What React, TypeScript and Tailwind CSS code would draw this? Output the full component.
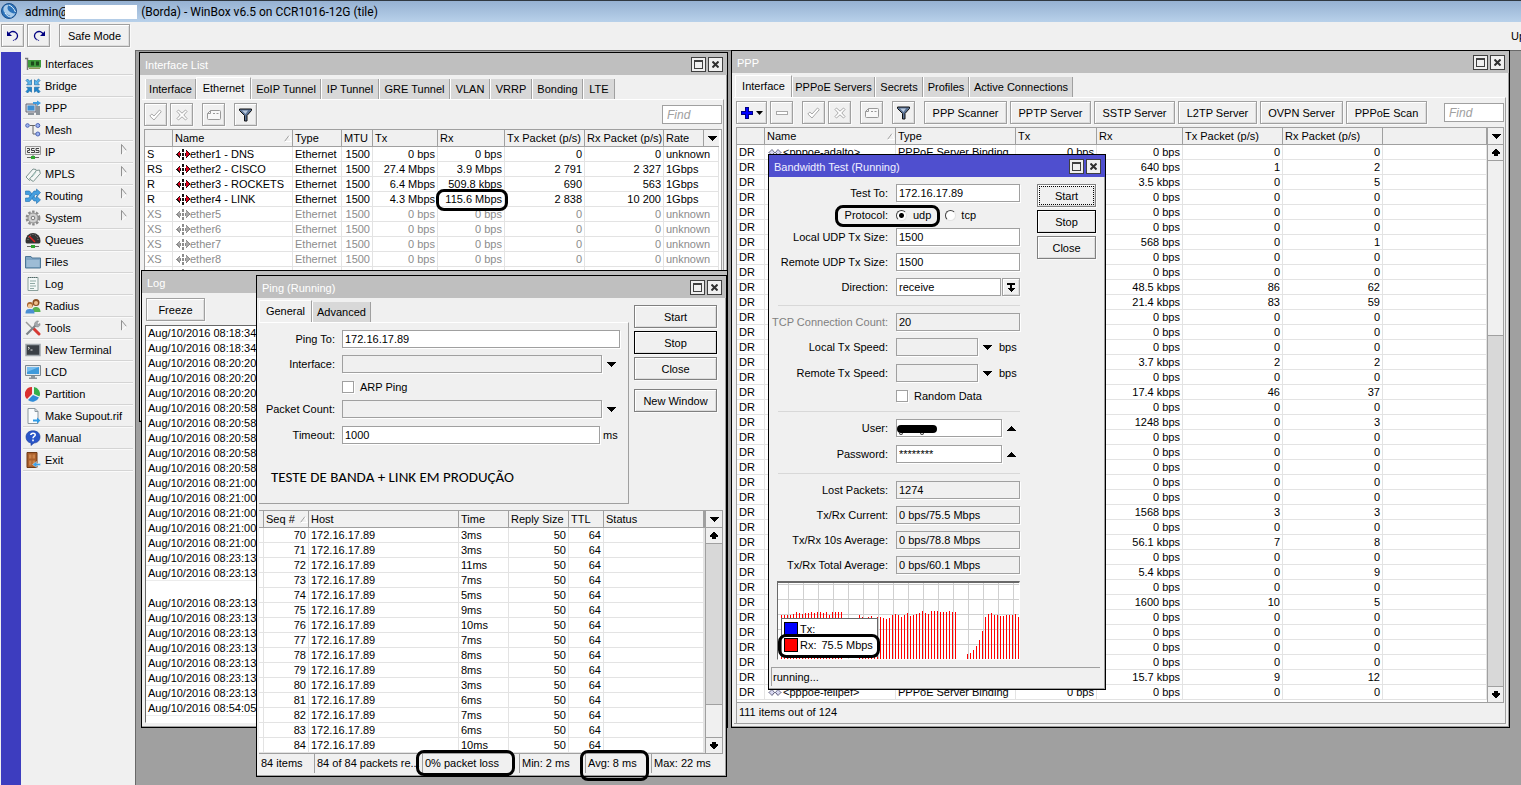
import type { ReactNode } from "react";
import clsx from "clsx";

const BEVEL = "border bg-[#f0f0f0] shadow-[inset_1px_1px_0_#fff,inset_-1px_-1px_0_#dcdcdc,1px_1px_0_#fafafa]";

/* ---------- small glyphs ---------- */

const DownTriangle = () => (
  <svg width="10" height="5" viewBox="0 0 10 5" shapeRendering="crispEdges">
    <path d="M0 0h10L5 5z" />
  </svg>
);

const UpTriangle = () => (
  <svg width="10" height="5" viewBox="0 0 10 5" shapeRendering="crispEdges">
    <path d="M5 0l5 5H0z" />
  </svg>
);

const ScrollArrow = ({ down }: { down?: boolean }) => (
  <svg width="8" height="7" viewBox="0 0 8 7" shapeRendering="crispEdges" className={clsx(down && "rotate-180")}>
    <path d="M3 0h2v1h1v1h1v1h1v2H6v2H2V5H0V3h1V2h1V1h1z" />
  </svg>
);

const SortMark = () => (
  <svg width="8" height="7" viewBox="0 0 8 7" fill="none">
    <path d="M.5 6.500L5 .5" stroke="#a0a0a0" />
    <path d="M5 .5l2.500 6H.5" stroke="#fff" />
  </svg>
);

const TickIcon = () => (
  <svg width="13" height="12" viewBox="0 0 13 12" fill="#fff" stroke="#a8a8a8">
    <path d="M.8 7l2-2 2.200 2L10.500 1l1.800 1.600L5 11z" />
  </svg>
);

const CrossIcon = () => (
  <svg width="12" height="12" viewBox="0 0 12 12" fill="#fff" stroke="#a8a8a8">
    <path d="M1 2.500L2.500 1 6 4.200 9.500 1 11 2.500 7.800 6 11 9.500 9.500 11 6 7.800 2.500 11 1 9.500 4.200 6z" />
  </svg>
);

const NoteIcon = () => (
  <svg width="14" height="12" viewBox="0 0 14 12" fill="none" stroke="#999">
    <path d="M3.500 1.500h9q1 0 1 1v7q0 1-1 1h-11q-1 0-1-1v-5z" fill="#f8f8f8" />
    <path d="M.5 4.500h3v-3M6 4.500h2M9.500 4.500h2" />
  </svg>
);

const FilterIcon = () => (
  <svg width="13" height="14" viewBox="0 0 13 14">
    <path d="M.5 1h12v1.500L8 7.500v5.500H5.500V7.500L.5 2.500z" fill="#5b7396" stroke="#111" />
    <path d="M3 2.500h6L6.500 6z" fill="#b9c9de" />
  </svg>
);

const PlusIcon = () => (
  <svg width="12" height="12" viewBox="0 0 12 12" shapeRendering="crispEdges">
    <path d="M4 0h4v4h4v4H8v4H4V8H0V4h4z" fill="#000080" />
    <path d="M5 1h2v4h4v2H7v4H5V7H1V5h4z" fill="#0000ff" />
  </svg>
);

const MinusIcon = () => (
  <svg width="12" height="4" viewBox="0 0 12 4">
    <rect x=".5" y=".5" width="11" height="3" fill="#fff" stroke="#a8a8a8" />
  </svg>
);

const UndoIcon = ({ flip }: { flip?: boolean }) => (
  <svg width="12" height="11" viewBox="0 0 12 11" fill="none" stroke="#000080" strokeWidth="1.300" className={clsx(flip && "-scale-x-100")}>
    <path d="M1.500 4.500C3 1.500 6 .8 8.500 2.200c3 2 2.500 5.500 0 7.300" />
    <path d="M8.500 9.500l-2.500 1" strokeDasharray="1 1" />
    <path d="M0 1v5h5z" fill="#000080" stroke="none" />
  </svg>
);

const EtherIcon = ({ off }: { off?: boolean }) => (
  <svg width="14" height="11" viewBox="0 0 14 11" shapeRendering="crispEdges" className="shrink-0">
    <path d="M0 5l4-4v3h1v3H4v3zM14 5l-4-4v3H9v3h1v3z" fill={off ? "#8c8c8c" : "#201010"} />
    <path d="M1 5l3-3v6zM13 5l-3-3v6z" fill={off ? "#a8a8a8" : "#d8001c"} />
    <path d="M6 0h2v3H6zM6 4h2v3H6zM6 8h2v3H6z" fill={off ? "#8c8c8c" : "#111"} />
  </svg>
);

const PppoeIcon = () => (
  <svg width="14" height="9" viewBox="0 0 14 9" fill="#d8d8f0" stroke="#22224a" strokeDasharray="1 .5" className="shrink-0">
    <path d="M1 4.500L4 1.500l2.500 3L4 7.500zM13 4.500l-3-3-2.500 3 2.500 3z" />
  </svg>
);

/* ---------- controls ---------- */

function Btn({ children, className, label, dark }: { children: ReactNode; className?: string; label?: string; dark?: string }) {
  return (
    <button
      type="button"
      aria-label={label}
      className={clsx("flex h-[23px] shrink-0 items-center justify-center", BEVEL, dark ?? "border-[#a0a0a0]", className)}
    >
      {children}
    </button>
  );
}

const IconBtn = ({ label, children }: { label: string; children: ReactNode }) => (
  <Btn label={label} className="w-[23px]">
    {children}
  </Btn>
);

function Field({ id, value, className, off, label }: { id?: string; value?: string; className?: string; off?: boolean; label?: string }) {
  return (
    <input
      id={id}
      aria-label={label}
      defaultValue={value}
      readOnly={off}
      className={clsx(
        "h-[18px] min-w-0 border border-[#a0a0a0] px-[2px] shadow-[1px_1px_0_#fff] outline-none",
        off ? "bg-[#f0f0f0]" : "bg-white",
        className,
      )}
    />
  );
}

const Find = () => (
  <input
    aria-label="Find"
    placeholder="Find"
    className="ml-auto h-[19px] w-[60px] border border-[#a0a0a0] bg-white px-1 text-xs italic outline-none placeholder:text-[#a0a0a0]"
  />
);

const Check = ({ id }: { id: string }) => (
  <input id={id} type="checkbox" className="size-3 appearance-none border border-[#a0a0a0] bg-white shadow-[1px_1px_0_#fff]" />
);

const Radio = ({ id, checked }: { id: string; checked?: boolean }) => (
  <input
    id={id}
    type="radio"
    name="protocol"
    defaultChecked={checked}
    className="size-[11px] appearance-none rounded-full border border-t-[#404040] border-r-[#e3e3e3] border-b-[#e3e3e3] border-l-[#404040] bg-white checked:bg-[radial-gradient(circle,#000_2px,#fff_3px)]"
  />
);

const ArrowBtn = ({ label, up }: { label: string; up?: boolean }) => (
  <button type="button" aria-label={label} className="flex h-[18px] w-[10px] items-center justify-center">
    {up ? <UpTriangle /> : <DownTriangle />}
  </button>
);

function Ring({ className }: { className: string }) {
  return <div className={clsx("pointer-events-none absolute rounded-lg border-[3px] border-black", className)} />;
}

/* ---------- window chrome ---------- */

function Win({ title, active, className, children }: { title: string; active?: boolean; className: string; children: ReactNode }) {
  return (
    <section className={clsx("absolute flex flex-col border border-black bg-[#f0f0f0] shadow-[inset_-1px_-1px_0_#a0a0a0]", className)}>
      <header
        className={clsx(
          "flex h-[22px] shrink-0 items-center gap-[2px] pr-1 pl-[5px]",
          active ? "bg-[#4f4fcf] text-[#f0f0ff]" : "bg-[#bfbfbf] text-white",
        )}
      >
        <h2 className="mt-[2px] mr-auto">{title}</h2>
        <button type="button" aria-label="Maximize" className="flex size-[15px] items-center justify-center border border-[#404040] bg-[#f0f0f0]">
          <span className="size-[9px] border border-t-2 border-[#404040]" />
        </button>
        <button type="button" aria-label="Close" className="flex size-[15px] items-center justify-center border border-[#404040] bg-[#f0f0f0]">
          <svg width="7" height="7" viewBox="0 0 7 7" stroke="#303030" strokeWidth="2">
            <path d="M.5.5l6 6M6.500.5l-6 6" />
          </svg>
        </button>
      </header>
      {children}
    </section>
  );
}

type Tab = { label: string; width: string };

function Tabs({ tabs, active, className }: { tabs: Tab[]; active: string; className?: string }) {
  return (
    <div role="tablist" className={clsx("mt-[2px] flex h-[22px] shrink-0 items-end", className)}>
      {tabs.map((t) => (
        <button
          key={t.label}
          type="button"
          role="tab"
          aria-selected={t.label === active}
          className={clsx(
            "shrink-0 border-r border-l border-l-white border-r-[#a0a0a0]",
            t.label === active ? "h-[22px] border-t border-t-white bg-[#f0f0f0] pb-[2px]" : "h-5 bg-[#d8d8d8]",
            t.width,
          )}
        >
          {t.label}
        </button>
      ))}
    </div>
  );
}

/* ---------- tables ---------- */

type Col = { label: string; width?: string; right?: boolean; sort?: boolean; menu?: boolean };

function Grid({ cols, rows, dim }: { cols: Col[]; rows: ReactNode[][]; dim?: (i: number) => boolean }) {
  return (
    <table className="w-full table-fixed border-separate border-spacing-0">
      <thead>
        <tr>
          {cols.map((c, i) => (
            <th
              key={i}
              className={clsx(
                "h-[17px] border-r border-b border-[#a0a0a0] bg-[#f0f0f0] p-0 text-left leading-4 font-normal",
                c.width,
                c.menu && "border-r-0",
              )}
            >
              <div className={clsx("flex h-4 items-center justify-between", c.label && "pl-[2px]")}>
                {c.label}
                {c.sort && <SortMark />}
                {c.menu && (
                  <button type="button" aria-label="Columns" className="flex h-4 w-4 items-center justify-center border-l border-[#a0a0a0]">
                    <DownTriangle />
                  </button>
                )}
              </div>
            </th>
          ))}
        </tr>
      </thead>
      <tbody>
        {rows.map((r, i) => (
          <tr key={i} className={clsx(dim?.(i) && "text-[#8c8c8c]")}>
            {cols.map((c, j) => (
              <td
                key={j}
                className={clsx(
                  "h-[15px] border-r border-b border-[#e3e3e3] p-0 leading-[14px]",
                  c.right ? "pr-[2px] text-right" : c.label && "pl-[2px]",
                )}
              >
                {r[j]}
              </td>
            ))}
          </tr>
        ))}
      </tbody>
    </table>
  );
}

function ScrollBar({ children, className }: { children: ReactNode; className?: string }) {
  return (
    <div className={clsx("flex shrink-0 flex-col border-l border-[#a0a0a0] bg-[#d8d8d8]", className)}>
      <button type="button" aria-label="Columns" className="flex h-[17px] shrink-0 items-center justify-center border-b border-[#a0a0a0] bg-[#f0f0f0]">
        <DownTriangle />
      </button>
      <button type="button" aria-label="Scroll up" className="flex h-4 shrink-0 items-center justify-center border-b border-[#a0a0a0] bg-[#f0f0f0]">
        <ScrollArrow />
      </button>
      {children}
      <button type="button" aria-label="Scroll down" className="flex h-4 shrink-0 items-center justify-center border-t border-[#a0a0a0] bg-[#f0f0f0]">
        <ScrollArrow down />
      </button>
    </div>
  );
}

/* ---------- Interface List ---------- */

const ifaceTabs: Tab[] = [
  { label: "Interface", width: "w-[51px]" },
  { label: "Ethernet", width: "w-[55px]" },
  { label: "EoIP Tunnel", width: "w-[70px]" },
  { label: "IP Tunnel", width: "w-[58px]" },
  { label: "GRE Tunnel", width: "w-[71px]" },
  { label: "VLAN", width: "w-[40px]" },
  { label: "VRRP", width: "w-[42px]" },
  { label: "Bonding", width: "w-[51px]" },
  { label: "LTE", width: "w-[32px]" },
];

const ifaceCols: Col[] = [
  { label: "", width: "w-[28px]" },
  { label: "Name", width: "w-[120px]", sort: true },
  { label: "Type", width: "w-[49px]" },
  { label: "MTU", width: "w-[31px]", right: true },
  { label: "Tx", width: "w-[65px]", right: true },
  { label: "Rx", width: "w-[67px]", right: true },
  { label: "Tx Packet (p/s)", width: "w-[80px]", right: true },
  { label: "Rx Packet (p/s)", width: "w-[79px]", right: true },
  { label: "Rate", menu: true },
];

const ifaces = [
  ["S", "ether1 - DNS", "0 bps", "0 bps", "0", "0", "unknown"],
  ["RS", "ether2 - CISCO", "27.4 Mbps", "3.9 Mbps", "2 791", "2 327", "1Gbps"],
  ["R", "ether3 - ROCKETS", "6.4 Mbps", "509.8 kbps", "690", "563", "1Gbps"],
  ["R", "ether4 - LINK", "4.3 Mbps", "115.6 Mbps", "2 838", "10 200", "1Gbps"],
  ["XS", "ether5", "0 bps", "0 bps", "0", "0", "unknown"],
  ["XS", "ether6", "0 bps", "0 bps", "0", "0", "unknown"],
  ["XS", "ether7", "0 bps", "0 bps", "0", "0", "unknown"],
  ["XS", "ether8", "0 bps", "0 bps", "0", "0", "unknown"],
  ["XS", "ether9", "0 bps", "0 bps", "0", "0", "unknown"],
];

function InterfaceList() {
  const rows = ifaces.map(([flag, name, tx, rx, txp, rxp, rate]) => [
    <span className="pl-[2px]">{flag}</span>,
    <span className="flex items-center pl-px">
      <EtherIcon off={flag === "XS"} />
      {name}
    </span>,
    "Ethernet",
    "1500",
    tx,
    rx,
    txp,
    rxp,
    rate,
  ]);
  return (
    <Win title="Interface List" className="top-[2px] left-[4px] h-[370px] w-[589px]">
      <Tabs tabs={ifaceTabs} active="Ethernet" className="pl-[5px]" />
      <div className="mr-[3px] mb-[3px] ml-[2px] flex min-h-0 flex-1 flex-col gap-[3px] border-t border-r border-t-white border-r-[#a0a0a0] pt-[3px] pr-px pl-[2px]">
        <div className="flex items-center gap-[9px]">
          <div className="flex gap-[3px]">
            <IconBtn label="Enable"><TickIcon /></IconBtn>
            <IconBtn label="Disable"><CrossIcon /></IconBtn>
          </div>
          <IconBtn label="Comment"><NoteIcon /></IconBtn>
          <IconBtn label="Filter"><FilterIcon /></IconBtn>
          <Find />
        </div>
        <div className="min-h-0 flex-1 overflow-hidden border border-[#a0a0a0] bg-white pr-[2px]">
          <Grid cols={ifaceCols} rows={rows} dim={(i) => i > 3} />
        </div>
      </div>
    </Win>
  );
}

/* ---------- Log ---------- */

const logTimes = [
  "08:18:34", "08:18:34", "08:20:20", "08:20:20", "08:20:20",
  "08:20:58", "08:20:58", "08:20:58", "08:20:58", "08:20:58",
  "08:21:00", "08:21:00", "08:21:00", "08:21:00", "08:21:00",
  "08:23:13", "08:23:13", "",
  "08:23:13", "08:23:13", "08:23:13", "08:23:13", "08:23:13", "08:23:13", "08:23:13",
  "08:54:05",
];

function LogWindow() {
  return (
    <Win title="Log" className="top-[220px] left-[6px] h-[458px] w-[587px]">
      <div className="flex min-h-0 flex-1 flex-col gap-1 px-[3px] pt-[5px] pb-[4px]">
        <Btn className="ml-px w-[59px]">Freeze</Btn>
        <ul className="min-h-0 flex-1 overflow-hidden border border-t-[#696969] border-r-white border-b-white border-l-[#696969] bg-white">
          {logTimes.map((t, i) => (
            <li key={i} className={clsx("h-[15px] pl-[2px] leading-[14px]", t ? "border-b border-[#ececec]" : "")}>
              {t && `Aug/10/2016 ${t}`}
            </li>
          ))}
        </ul>
      </div>
    </Win>
  );
}

/* ---------- Ping ---------- */

const pingTabs: Tab[] = [
  { label: "General", width: "w-[53px]" },
  { label: "Advanced", width: "w-[59px]" },
];

const pingCols: Col[] = [
  { label: "", width: "w-[5px]" },
  { label: "Seq #", width: "w-[45px]", right: true, sort: true },
  { label: "Host", width: "w-[150px]" },
  { label: "Time", width: "w-[50px]" },
  { label: "Reply Size", width: "w-[60px]", right: true },
  { label: "TTL", width: "w-[35px]", right: true },
  { label: "Status", width: "w-[100px]" },
  { label: "" },
];

const pingTimes = [3, 3, 11, 7, 5, 9, 10, 7, 8, 8, 3, 6, 7, 6, 10];

const pingRows = pingTimes.map((ms, i) => ["", String(70 + i), "172.16.17.89", `${ms}ms`, "50", "64", "", ""]);

const pingStatus = [
  ["84 items", "w-[55px]"],
  ["84 of 84 packets re...", "w-[108px]"],
  ["0% packet loss", "w-[97px]"],
  ["Min: 2 ms", "w-[66px]"],
  ["Avg: 8 ms", "w-[66px]"],
  ["Max: 22 ms", "w-[72px]"],
];

function PingRow({ id, label, tall, children }: { id: string; label: string; tall?: boolean; children: ReactNode }) {
  return (
    <div className={clsx("flex", tall ? "h-[19px]" : "h-[18px]")}>
      <label htmlFor={id} className="mr-[7px] w-[76px] text-right leading-[18px]">
        {label}
      </label>
      {children}
    </div>
  );
}

function PingWindow() {
  return (
    <Win title="Ping (Running)" className="top-[225px] left-[121px] h-[502px] w-[471px]">
      <div className="flex pr-[9px] pl-[2px]">
        <div className="flex-1">
          <Tabs tabs={pingTabs} active="General" />
          <form className="flex h-[182px] flex-col gap-[7px] border-t border-r border-b border-t-white border-r-[#a0a0a0] border-b-[#a0a0a0] pt-[7px]">
            <PingRow id="ping-to" label="Ping To:">
              <Field id="ping-to" value="172.16.17.89" className="w-[278px]" />
            </PingRow>
            <PingRow id="ping-if" label="Interface:" tall>
              <Field id="ping-if" off className="mr-1 w-[260px]" />
              <ArrowBtn label="Choose interface" />
            </PingRow>
            <div className="flex h-3 items-center gap-[6px] pl-[83px]">
              <Check id="arp" />
              <label htmlFor="arp">ARP Ping</label>
            </div>
            <PingRow id="ping-count" label="Packet Count:" tall>
              <Field id="ping-count" off className="mr-1 w-[260px]" />
              <ArrowBtn label="Set packet count" />
            </PingRow>
            <PingRow id="ping-timeout" label="Timeout:">
              <Field id="ping-timeout" value="1000" className="mr-[3px] w-[258px]" />
              <span className="leading-[18px]">ms</span>
            </PingRow>
            <p className="mt-4 pl-3 font-[Carlito,Lato,sans-serif] text-[15px] leading-5">TESTE DE BANDA + LINK EM PRODUÇÃO</p>
          </form>
        </div>
        <div className="ml-[5px] flex w-[83px] flex-col gap-[3px] pt-[7px]">
          <Btn dark="border-[#808080]">Start</Btn>
          <Btn dark="border-black">Stop</Btn>
          <Btn dark="border-[#808080]">Close</Btn>
          <Btn dark="border-[#808080]" className="mt-[6px]">New Window</Btn>
        </div>
      </div>
      <div className="mt-[6px] mr-[3px] ml-[2px] flex min-h-0 flex-1 border border-l-0 border-[#a0a0a0] bg-white">
        <div className="min-w-0 flex-1 overflow-hidden">
          <Grid cols={pingCols} rows={pingRows} />
        </div>
        <ScrollBar className="w-[17px]">
          <div className="mt-auto h-[33px] shrink-0 border-t border-[#a0a0a0] bg-[#f0f0f0]" />
        </ScrollBar>
      </div>
      <footer className="mx-[2px] mb-[3px] flex h-[19px] shrink-0">
        {pingStatus.map(([text, width], i) => (
          <span key={text} className={clsx("shrink-0 pl-[2px] leading-[19px]", i > 0 && "border-l border-[#a0a0a0]", width)}>
            {text}
          </span>
        ))}
      </footer>
    </Win>
  );
}

/* ---------- PPP ---------- */

const pppTabs: Tab[] = [
  { label: "Interface", width: "w-[57px]" },
  { label: "PPPoE Servers", width: "w-[83px]" },
  { label: "Secrets", width: "w-[48px]" },
  { label: "Profiles", width: "w-[46px]" },
  { label: "Active Connections", width: "w-[104px]" },
];

const pppButtons = [
  ["PPP Scanner", "w-[83px]"],
  ["PPTP Server", "w-[81px]"],
  ["SSTP Server", "w-[81px]"],
  ["L2TP Server", "w-[79px]"],
  ["OVPN Server", "w-[83px]"],
  ["PPPoE Scan", "w-[81px]"],
];

const pppCols: Col[] = [
  { label: "", width: "w-[28px]" },
  { label: "Name", width: "w-[131px]", sort: true },
  { label: "Type", width: "w-[120px]" },
  { label: "Tx", width: "w-[81px]", right: true },
  { label: "Rx", width: "w-[86px]", right: true },
  { label: "Tx Packet (p/s)", width: "w-[100px]", right: true },
  { label: "Rx Packet (p/s)", width: "w-[100px]", right: true },
  { label: "" },
];

const idle = ["0 bps", "0", "0"];
const traffic = [
  idle, ["640 bps", "1", "2"], ["3.5 kbps", "0", "5"], idle, idle, idle,
  ["568 bps", "0", "1"], idle, idle, ["48.5 kbps", "86", "62"], ["21.4 kbps", "83", "59"],
  idle, idle, idle, ["3.7 kbps", "2", "2"], idle, ["17.4 kbps", "46", "37"], idle,
  ["1248 bps", "0", "3"], idle, idle, idle, idle, idle, ["1568 bps", "3", "3"], idle,
  ["56.1 kbps", "7", "8"], idle, ["5.4 kbps", "0", "9"], idle, ["1600 bps", "10", "5"],
  idle, idle, idle, idle, ["15.7 kbps", "9", "12"], idle,
];

function PppWindow() {
  const names: Record<number, string> = { 0: "<pppoe-adalto>", [traffic.length - 1]: "<pppoe-felipef>" };
  const rows = traffic.map(([rx, txp, rxp], i) =>
    names[i]
      ? [
          <span className="pl-[2px]">DR</span>,
          <span className="flex items-center gap-px pl-px">
            <PppoeIcon />
            {names[i]}
          </span>,
          "PPPoE Server Binding",
          "0 bps",
          rx,
          txp,
          rxp,
          "",
        ]
      : [<span className="pl-[2px]">DR</span>, "", "", "", rx, txp, rxp, ""],
  );
  return (
    <Win title="PPP" className="top-0 left-[596px] h-[678px] w-[779px]">
      <Tabs tabs={pppTabs} active="Interface" className="pl-[3px]" />
      <div className="mr-[3px] mb-[3px] ml-[2px] flex min-h-0 flex-1 flex-col border border-l-0 border-[#a0a0a0] border-t-white pt-[3px] pr-px pl-[2px]">
        <div className="mb-[3px] flex items-center gap-[9px]">
          <div className="flex gap-[3px]">
            <Btn label="Add" className="w-[31px] gap-[3px]">
              <PlusIcon />
              <svg width="7" height="4" viewBox="0 0 7 4"><path d="M0 0h7L3.500 4z" /></svg>
            </Btn>
            <IconBtn label="Remove"><MinusIcon /></IconBtn>
          </div>
          <div className="flex gap-[3px]">
            <IconBtn label="Enable"><TickIcon /></IconBtn>
            <IconBtn label="Disable"><CrossIcon /></IconBtn>
          </div>
          <IconBtn label="Comment"><NoteIcon /></IconBtn>
          <IconBtn label="Filter"><FilterIcon /></IconBtn>
          <div className="flex gap-[3px]">
            {pppButtons.map(([label, width]) => (
              <Btn key={label} className={width}>{label}</Btn>
            ))}
          </div>
          <Find />
        </div>
        <div className="flex min-h-0 flex-1 border border-[#a0a0a0] bg-white">
          <div className="min-w-0 flex-1 overflow-hidden">
            <Grid cols={pppCols} rows={rows} />
          </div>
          <ScrollBar className="w-4">
            <div className="h-[175px] shrink-0 border-b border-[#a0a0a0] bg-[#f0f0f0]" />
            <div className="flex-1" />
          </ScrollBar>
        </div>
        <footer className="h-5 shrink-0 border-l border-[#a0a0a0] pl-[2px] leading-[19px]">111 items out of 124</footer>
      </div>
    </Win>
  );
}

/* ---------- Bandwidth Test ---------- */

const rxBars = [
  44, 44, 44, 44, 45, 47, 46, 45, 46, 46, 47, 46, 47, 47, 46, 47, 44, 47, 47, 47, 47, 0, 0, 0, 0, 0,
  44, 42, 41, 42, 43, 41, 42, 42, 41, 40, 41, 44, 45, 44, 42, 44, 46, 43, 44, 45, 46, 48, 46, 45, 48, 48, 48, 47, 47, 47, 48, 47, 47, 0, 0, 0,
  5, 6, 9, 13, 19, 28, 42, 45, 46, 44, 44, 43, 43, 44, 44, 44, 45, 42,
];

function TrafficChart() {
  return (
    <div className="relative ml-2 h-[79px] border border-t-2 border-t-[#696969] border-r-white border-b-white border-l-[#696969] bg-white">
      <svg width="241" height="76" viewBox="0 0 241 76" shapeRendering="crispEdges" className="block">
        {Array.from({ length: 16 }, (_, i) => (
          <rect key={i} x={10 + i * 15} y="0" width="1" height="76" fill="#d0d0d0" />
        ))}
        {Array.from({ length: 6 }, (_, i) => (
          <rect key={i} x="0" y={1 + i * 15} width="241" height="1" fill="#d0d0d0" />
        ))}
        {rxBars.map((h, i) => (
          <rect key={i} x={3 + i * 3} y={76 - h} width="1" height={h} fill="#f00" />
        ))}
      </svg>
      <dl className="absolute top-[35px] left-[3px] flex h-[39px] w-[97px] flex-col gap-[2px] border border-[#696969] bg-white px-[2px] pt-[3px] leading-[14px]">
        <div className="flex gap-[2px]">
          <dt className="flex gap-[2px]"><span className="size-[14px] border border-black bg-[#0000ff]" />Tx:</dt>
        </div>
        <div className="flex gap-[5px]">
          <dt className="flex gap-[2px]"><span className="size-[14px] border border-black bg-[#ff0000]" />Rx:</dt>
          <dd>75.5 Mbps</dd>
        </div>
      </dl>
    </div>
  );
}

function TestRow({ id, label, height = "h-[18px]", off, children }: { id: string; label: string; height?: string; off?: boolean; children: ReactNode }) {
  return (
    <div className={clsx("flex", height)}>
      <label htmlFor={id} className={clsx("mr-2 w-[119px] text-right leading-[18px]", off && "text-[#808080]")}>
        {label}
      </label>
      {children}
    </div>
  );
}

const Divider = () => <hr className="ml-[9px] h-[3px] border-t-0 border-b border-[#d8d8d8]" />;

const results = [
  ["lost", "Lost Packets:", "1274"],
  ["current", "Tx/Rx Current:", "0 bps/75.5 Mbps"],
  ["avg10", "Tx/Rx 10s Average:", "0 bps/78.8 Mbps"],
  ["total", "Tx/Rx Total Average:", "0 bps/60.1 Mbps"],
];

function BandwidthTest() {
  return (
    <Win title="Bandwidth Test (Running)" active className="top-[104px] left-[633px] h-[536px] w-[338px]">
      <div className="flex flex-1 pt-[7px]">
        <form className="flex w-[251px] flex-col gap-[7px]">
          <TestRow id="test-to" label="Test To:">
            <Field id="test-to" value="172.16.17.89" className="flex-1" />
          </TestRow>
          <fieldset className="flex h-3 items-center leading-3">
            <legend className="float-left mr-2 w-[119px] text-right">Protocol:</legend>
            <Radio id="udp" checked />
            <label htmlFor="udp" className="mr-[14px] ml-[6px]">udp</label>
            <Radio id="tcp" />
            <label htmlFor="tcp" className="ml-[5px]">tcp</label>
          </fieldset>
          <TestRow id="local-udp" label="Local UDP Tx Size:">
            <Field id="local-udp" value="1500" className="flex-1" />
          </TestRow>
          <TestRow id="remote-udp" label="Remote UDP Tx Size:">
            <Field id="remote-udp" value="1500" className="flex-1" />
          </TestRow>
          <TestRow id="direction" label="Direction:">
            <select id="direction" defaultValue="receive" className="h-[18px] flex-1 appearance-none border border-[#a0a0a0] bg-white px-[2px] leading-4 outline-none">
              <option>receive</option>
              <option>send</option>
              <option>both</option>
            </select>
            <button type="button" aria-label="Choose direction" className={clsx("ml-px flex h-[18px] w-[18px] items-center justify-center border-[#a0a0a0]", BEVEL)}>
              <svg width="8" height="9" viewBox="0 0 8 9" shapeRendering="crispEdges">
                <path d="M0 0h8v2H0zM3 2h2v3h3L4 9 0 5h3z" />
              </svg>
            </button>
          </TestRow>
          <Divider />
          <TestRow id="tcp-count" label="TCP Connection Count:" off>
            <Field id="tcp-count" value="20" off className="flex-1" />
          </TestRow>
          <TestRow id="local-speed" label="Local Tx Speed:" height="h-[19px]">
            <Field id="local-speed" off className="mr-1 w-[82px]" />
            <ArrowBtn label="Set local speed" />
            <span className="ml-[7px] leading-[18px]">bps</span>
          </TestRow>
          <TestRow id="remote-speed" label="Remote Tx Speed:" height="h-[19px]">
            <Field id="remote-speed" off className="mr-1 w-[82px]" />
            <ArrowBtn label="Set remote speed" />
            <span className="ml-[7px] leading-[18px]">bps</span>
          </TestRow>
          <div className="flex h-3 items-center gap-[6px] pl-[127px]">
            <Check id="random" />
            <label htmlFor="random">Random Data</label>
          </div>
          <Divider />
          <TestRow id="user" label="User:" height="h-[19px]">
            <div className="relative mr-1 flex w-[106px]">
              <Field id="user" className="flex-1" />
              <svg width="42" height="13" viewBox="0 0 42 13" className="absolute top-[5px] left-0">
                <path d="M5 5h32" stroke="#000" strokeWidth="8" strokeLinecap="round" />
                <path d="M3 9.500q2 2 4 0M24 9.500q2 2 4 0" fill="none" stroke="#222" />
              </svg>
            </div>
            <ArrowBtn label="Clear user" up />
          </TestRow>
          <TestRow id="password" label="Password:" height="h-[19px]">
            <Field id="password" value="********" className="mr-1 w-[106px]" />
            <ArrowBtn label="Clear password" up />
          </TestRow>
          <Divider />
          {results.map(([id, label, value]) => (
            <TestRow key={id} id={id} label={label}>
              <Field id={id} value={value} off className="flex-1" />
            </TestRow>
          ))}
          <TrafficChart />
        </form>
        <div className="ml-[17px] flex w-[59px] flex-col gap-[3px]">
          <Btn dark="border-[#808080]" className="p-px">
            <span className="flex h-full w-full items-center justify-center border border-dotted border-black">Start</span>
          </Btn>
          <Btn dark="border-black">Stop</Btn>
          <Btn dark="border-[#808080]">Close</Btn>
        </div>
      </div>
      <footer className="mr-[5px] mb-[3px] ml-[2px] h-[19px] shrink-0 border-t border-l border-[#a0a0a0] pl-px leading-[18px]">running...</footer>
    </Win>
  );
}

/* ---------- side menu ---------- */

const icons: Record<string, ReactNode> = {
  Interfaces: (
    <>
      <path d="M0 2.500h2.500V14" stroke="#777" fill="none" strokeWidth="1.500" />
      <path d="M3 4h13v7.500H3z" fill="#3f9a3c" />
      <path d="M6 5.500h3v4H6zM11 5.500h3v4h-3z" fill="#1d4a1c" />
      <path d="M4 11.500h11V13H4z" fill="#8a9a58" />
    </>
  ),
  Bridge: (
    <g stroke="#1c6ca8" strokeWidth=".7">
      <path d="M1 2.500L2.500 1l2.300 2.300L6.500 1.800v5H1.600L3.300 5z" fill="#5cb8ee" />
      <path d="M15 2.500L13.500 1l-2.300 2.300L9.500 1.800v5h4.900L12.700 5z" fill="#5cb8ee" />
      <path d="M1 13.500L2.500 15l2.300-2.300 1.700 1.500v-5H1.600L3.300 11z" fill="#1f86cc" />
      <path d="M15 13.500L13.500 15l-2.300-2.300-1.700 1.500v-5h4.900L12.700 11z" fill="#1f86cc" />
    </g>
  ),
  PPP: (
    <>
      <path d="M1 4h10v8H1z" fill="#d5dce2" stroke="#667" />
      <path d="M2.500 5.500h7v5h-7z" fill="#3f8fd2" />
      <path d="M11 6h4v9h-4zM3 13h6v2H3z" fill="#8b939b" />
      <path d="M8 2h4V.5L16 3l-4 3V4H8z" fill="#3d9be0" />
    </>
  ),
  Mesh: (
    <>
      <path d="M5 3.500h5M8 4v8h3" stroke="#666" fill="none" />
      <g fill="#9db4ee" stroke="#4c63b4">
        <circle cx="2.500" cy="3.500" r="1.800" />
        <circle cx="12.800" cy="3.500" r="2" />
        <circle cx="12.800" cy="12" r="2" />
      </g>
    </>
  ),
  IP: (
    <>
      <path d="M.5 2.500h15v8H.5z" fill="#eee" stroke="#999" />
      <path d="M2 4.500h2.500v2H2.500v2H5M6 8.500h3.500v-2h-3v-2H9.500M14 4.500h-3v2h3v2h-3.500" stroke="#444" fill="none" />
      <path d="M2 13.500h12M8 11v2" stroke="#666" />
      <path d="M6 12h4v3H6z" fill="#2fa52f" />
    </>
  ),
  MPLS: (
    <g fill="#f3f6f5" stroke="#7d9490">
      <path d="M1 11l7-8 3 .5.500 3-7 8z" />
      <path d="M4.500 13l7-8.500 3-.5.800 3.500-7 8z" />
      <path d="M7 11l4-5" stroke="#9fc4bd" />
    </g>
  ),
  Routing: (
    <g fill="#459fe0" stroke="#1e6cab" strokeWidth=".6">
      <path d="M.5 3h4l6 7h1V8l4 4-4 3.500V13H9L3.500 6.500h-3z" />
      <path d="M.5 13.500h4l6-7h1.500v2l3.500-4L11.500 1v2H9l-5.500 7h-3z" />
    </g>
  ),
  System: (
    <>
      <circle cx="8" cy="8" r="6.300" fill="none" stroke="#8a8a8a" strokeWidth="2.200" strokeDasharray="2.500 1.500" />
      <circle cx="8" cy="8" r="5" fill="#d0d0d0" stroke="#8e8e8e" />
      <circle cx="8" cy="8" r="1.800" fill="#f0f0f0" stroke="#777" />
    </>
  ),
  Queues: (
    <>
      <path d="M.5 9a7.500 8 0 0 1 15 0q0 2.500-1.500 2.500H2Q.5 11.500.5 9z" fill="#333" />
      <path d="M3 8a5 5.500 0 0 1 10 0" stroke="#999" fill="none" strokeDasharray="1 1.500" />
      <path d="M4 4l6 6" stroke="#e02020" strokeWidth="1.500" />
      <path d="M2 14.500h12" stroke="#666" />
      <path d="M6 13h4v3H6z" fill="#2fa52f" />
    </>
  ),
  Files: (
    <>
      <path d="M.5 2.500H6l1 1.500h8.500v10H.5z" fill="#7fa5c4" stroke="#4d7696" />
      <path d="M1.500 6h13v7h-13z" fill="#9dbcd5" />
    </>
  ),
  Log: (
    <>
      <path d="M3 1.500h10v13H3z" fill="#f3f8f7" stroke="#8aa09c" />
      <path d="M5 5h6M5 7.500h5M5 10h6M5 12.500h4" stroke="#8fa9a4" />
      <path d="M3 1.500h10" stroke="#566" strokeDasharray="1 1" />
    </>
  ),
  Radius: (
    <>
      <circle cx="11" cy="4.500" r="3.500" fill="#8a4f22" />
      <circle cx="11" cy="5" r="2" fill="#f0c08c" />
      <path d="M7 14c0-4 2-5 4-5s4.500 1 4.500 5z" fill="#58b352" />
      <circle cx="5" cy="7" r="3" fill="#a8622a" />
      <circle cx="5" cy="8" r="2.200" fill="#f3c795" />
      <path d="M.5 15.500c0-4 2-4.500 4.500-4.500s4.500.5 4.500 4.500z" fill="#4a8fd4" />
    </>
  ),
  Tools: (
    <>
      <path d="M1 2l7 7" stroke="#999" strokeWidth="1.500" />
      <path d="M9 9l5 5" stroke="#d63a34" strokeWidth="3" strokeLinecap="round" />
      <path d="M1.500 14.500L11 5" stroke="#7d8388" strokeWidth="2.200" />
      <path d="M10 6c-1.500-3 1-5.500 3.500-5L12 3l1 1.500 2-1c.5 3-2.500 4.500-5 2.500z" fill="#a4aaaf" stroke="#777" strokeWidth=".5" />
    </>
  ),
  "New Terminal": (
    <>
      <path d="M1 2.500h14v11H1z" fill="#3a3f45" stroke="#a0a6ac" strokeWidth="1.500" />
      <path d="M3 5l1.500 1.200L3 7.500M5.500 8h2" stroke="#e4e4e4" fill="none" />
    </>
  ),
  LCD: (
    <>
      <path d="M.5 1.500h15v10H.5z" fill="#e5eaee" stroke="#7d8890" />
      <path d="M2 3h12v7H2z" fill="#3f9adb" />
      <path d="M2 3h12L2 8z" fill="#77bdee" />
      <path d="M6 12h4v1.500h2V15H4v-1.500h2z" fill="#8c959c" />
    </>
  ),
  Partition: (
    <>
      <path d="M7 1v7l-5 5A7 7 0 0 1 7 1z" fill="#d93030" />
      <path d="M9 1a7 7 0 0 1 5.500 9.500L9 8z" fill="#35b04a" />
      <path d="M8 9l6 2.500A7 7 0 0 1 3 14z" fill="#2f8bd8" />
    </>
  ),
  "Make Supout.rif": (
    <>
      <path d="M3 .5h7l3 3v12H3z" fill="#fafcfd" stroke="#8b979e" />
      <path d="M10 .5v3h3" fill="none" stroke="#8b979e" />
      <path d="M8 11.500h4V9.500l3.500 3-3.500 3v-2H8z" fill="#2f9be6" />
    </>
  ),
  Manual: (
    <>
      <path d="M8 .8c4.500 0 7 2.700 7 6s-2 6-6 6.200L6 15.500V13C2.500 12.300 1 9.800 1 7 1 3.500 3.500.8 8 .8z" fill="#2a55c8" stroke="#173a98" strokeWidth=".6" />
      <path d="M5.800 5c.2-2.500 4.600-2.300 4.400 0-.1 1.500-2.200 1.500-2.200 3.200M8 9.500v1.700" stroke="#fff" strokeWidth="1.600" fill="none" />
    </>
  ),
  Exit: (
    <>
      <path d="M2 .5h10v15H2z" fill="#a85f2c" stroke="#6e3a16" />
      <path d="M4 2.500h2.500v4H4zM7.500 2.500H10v4H7.500zM4 8.500h2.500v5H4zM7.500 8.500H10v5H7.500z" fill="#c98249" />
      <path d="M15.500 11.500h-4V9.500L7.500 12.500l4 3v-2h4z" fill="#3aa0e8" stroke="#e8f4fc" strokeWidth=".4" />
    </>
  ),
};

const submenus = ["IP", "MPLS", "Routing", "System", "Tools"];

function SideMenu() {
  return (
    <nav className="flex w-[135px] shrink-0 gap-[2px] bg-[#f0f0f0] pl-px">
      <div className="mt-[2px] w-5 bg-[#3d3dbf]" />
      <ul className="mt-[3px] w-[110px]">
        {Object.keys(icons).map((name) => (
          <li key={name} className="h-[22px] border-b border-[#d4d4d4] shadow-[0_1px_0_#fafafa]">
            <button type="button" className="flex h-[21px] w-full items-center gap-1 pl-[2px]">
              <svg width="16" height="16" viewBox="0 0 16 16" className="shrink-0">{icons[name]}</svg>
              {name}
              {submenus.includes(name) && (
                <svg width="6" height="11" viewBox="0 0 6 11" fill="none" className="mr-[6px] mb-1 ml-auto">
                  <path d="M.5 10.500V.5l5 6" stroke="#909090" />
                  <path d="M5.500 6.500l-5 4" stroke="#fff" />
                </svg>
              )}
            </button>
          </li>
        ))}
      </ul>
    </nav>
  );
}

/* ---------- page ---------- */

export default function App() {
  return (
    <div className="flex h-screen flex-col overflow-hidden bg-[#f0f0f0] font-['Liberation_Sans',Arial,sans-serif] text-[11px] leading-4 whitespace-nowrap text-black">
      <header className="flex h-[22px] shrink-0 items-center border-t border-[#303840] bg-linear-to-b from-[#96b1d2] to-[#b8d1ea] pl-px font-[Roboto,sans-serif] text-xs">
        <svg width="17" height="17" viewBox="0 0 17 17" className="mr-[7px]">
          <circle cx="8" cy="8" r="7.500" fill="#2c73ba" stroke="#1b4f8c" />
          <path d="M3 4c1-1.500 3-2.500 5-2-2.500 2-1.500 5 .5 6.500s4.500 2.500 6 1.500c-1 2.500-2.500 3.500-4 4C9 12 6 12 4 10S2 6 3 4z" fill="#a9cbea" />
          <path d="M8 2c2.500 1 5 3.500 6.500 7M4 10c1.500 2.500 4 4 6.500 4" fill="none" stroke="#e9f3fb" />
        </svg>
        <h1 className="flex items-center">
          admin@
          <span className="mr-1 -ml-1 h-[14px] w-[72px] bg-white" />
          (Borda) - WinBox v6.5 on CCR1016-12G (tile)
        </h1>
      </header>
      <div className="flex h-7 shrink-0 items-center overflow-hidden pb-px pl-px">
        <Btn label="Undo" className="mr-[3px] w-[23px]"><UndoIcon /></Btn>
        <Btn label="Redo" className="mr-[9px] w-[23px]"><UndoIcon flip /></Btn>
        <Btn className="w-[71px]">Safe Mode</Btn>
        <span className="ml-auto w-[10px]">Up</span>
      </div>
      <div className="flex min-h-0 flex-1">
        <SideMenu />
        <main className="relative flex-1 overflow-hidden bg-[#a0a0a0] shadow-[inset_1px_1px_0_#696969]">
          <InterfaceList />
          <LogWindow />
          <PingWindow />
          <PppWindow />
          <BandwidthTest />
          <Ring className="top-[139px] left-[301px] h-[22px] w-[72px]" />
          <Ring className="top-[700px] left-[281px] h-[26px] w-[99px]" />
          <Ring className="top-[700px] left-[445px] h-[31px] w-[69px]" />
          <Ring className="top-[155px] left-[700px] h-[22px] w-[105px]" />
          <Ring className="top-[584px] left-[643px] h-[24px] w-[102px]" />
        </main>
      </div>
    </div>
  );
}
